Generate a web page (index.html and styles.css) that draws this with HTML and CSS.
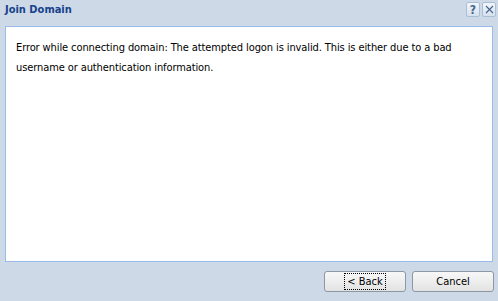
FILE: index.html
```html
<!DOCTYPE html>
<html lang="en">
<head>
    <meta charset="UTF-8">
    <title>Join Domain</title>
    <link rel="stylesheet" href="styles.css">
</head>
<body>
    <div class="window">
        <div class="header">
            <span class="title">Join Domain</span>
            <div class="tools">
                <span class="tool tool-help">?</span>
                <span class="tool">
                    <svg width="9" height="9" viewBox="0 0 9 9"><path d="M1 1L8 8M8 1L1 8" stroke="#4a6590" stroke-width="1.2" fill="none"/></svg>
                </span>
            </div>
        </div>
        <div class="body">
            <p class="message">Error while connecting domain: The attempted logon is invalid. This is either due to a bad username or authentication information.</p>
        </div>
        <div class="footer">
            <button class="btn btn-focus"><span>&lt; Back</span></button>
            <button class="btn"><span>Cancel</span></button>
        </div>
    </div>
</body>
</html>
```

FILE: styles.css
```css
body {
    margin: 0;
    padding: 0;
    background-color: #ced9e7;
    font-family: "DejaVu Sans Condensed", "DejaVu Sans", Tahoma, sans-serif;
    font-size: 11px;
}
.window {
    width: 498px;
    height: 301px;
    display: flex;
    flex-direction: column;
    box-sizing: border-box;
    padding: 0 5px 0 5px;
}
.header {
    height: 26px;
    display: flex;
    align-items: flex-start;
    justify-content: space-between;
}
.title {
    color: #15428b;
    font-weight: bold;
    font-size: 11px;
    padding-top: 3px;
}
.tools {
    display: flex;
    gap: 2px;
    padding-top: 2px;
    margin-right: -3px;
}
.tool {
    width: 14px;
    height: 15px;
    border: 1px solid #a9bfd6;
    border-radius: 2px;
    background: linear-gradient(#f2f6fb, #d5e1ee);
    color: #4a6590;
    font-size: 12px;
    display: flex;
    align-items: center;
    justify-content: center;
    box-sizing: border-box;
}
.tool-help {
    font-weight: bold;
}
.body {
    height: 236px;
    background-color: #fff;
    border: 1px solid #99bbe8;
    box-sizing: border-box;
}
.message {
    margin: 0;
    padding: 11px 10px 0 10px;
    line-height: 20px;
    letter-spacing: -0.1px;
    color: #000;
}
.footer {
    flex: 1;
    display: flex;
    justify-content: flex-end;
    align-items: flex-start;
    padding-top: 9px;
    padding-right: 4px;
    margin-right: -5px;
    gap: 6px;
}
.btn {
    width: 82px;
    height: 21px;
    border: 1px solid #8e98a4;
    border-radius: 3px;
    background: linear-gradient(#f7f7f7 0%, #eeeeee 50%, #e2e2e2 100%);
    font-family: "DejaVu Sans Condensed", "DejaVu Sans", Tahoma, sans-serif;
    font-size: 11px;
    color: #000;
    padding: 0;
}
.btn-focus span {
    outline: 1px dotted #000;
    padding: 1px 2px;
}
```
